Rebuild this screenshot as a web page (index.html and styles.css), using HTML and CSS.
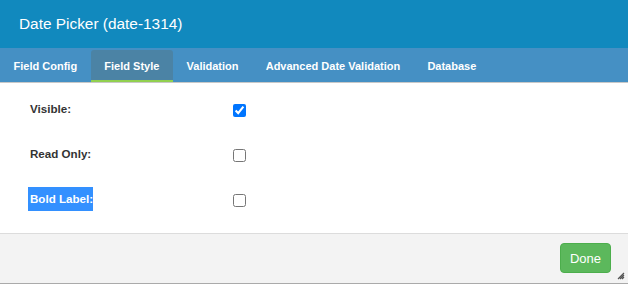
FILE: index.html
```html
<!DOCTYPE html>
<html lang="en">
<head>
  <meta charset="UTF-8">
  <title>Date Picker (date-1314)</title>
  <link rel="stylesheet" href="styles.css">
</head>
<body>

  <div class="dialog">
    <div class="dialog-header">Date Picker (date-1314)</div>

    <ul class="tabs">
      <li class="tab">Field Config</li>
      <li class="tab active">Field Style</li>
      <li class="tab">Validation</li>
      <li class="tab">Advanced Date Validation</li>
      <li class="tab">Database</li>
    </ul>

    <div class="dialog-body">
      <div class="row">
        <label class="row-label" for="visible">Visible:</label>
        <input type="checkbox" id="visible" checked>
      </div>
      <div class="row">
        <label class="row-label" for="readOnly">Read Only:</label>
        <input type="checkbox" id="readOnly">
      </div>
      <div class="row">
        <label class="row-label" for="boldLabel"><span class="selected">Bold Label:</span></label>
        <input type="checkbox" id="boldLabel">
      </div>
    </div>

    <div class="dialog-footer">
      <button class="btn-done">Done</button>
      <svg class="grip" width="8" height="8" viewBox="0 0 8 8">
        <path d="M7 1 L1 7 M7 3 L3 7 M7 5 L5 7" stroke="#555" stroke-width="1.2"/>
      </svg>
    </div>
  </div>

</body>
</html>
```

FILE: styles.css
```css
body {
  margin: 0;
  font-family: 'Liberation Sans', Arial, sans-serif;
  background: #fff;
}

.dialog {
  width: 628px;
  height: 284px;
  display: flex;
  flex-direction: column;
}

.dialog-header {
  height: 48px;
  flex: none;
  box-sizing: border-box;
  padding: 0 19px;
  display: flex;
  align-items: center;
  background: #1189be;
  color: #fff;
  font-size: 15.4px;
}

.tabs {
  list-style: none;
  margin: 0;
  padding: 2px 0 0;
  height: 35px;
  flex: none;
  box-sizing: border-box;
  display: flex;
  background: #4590c4;
  border-bottom: 1px solid #c8c8c8;
}

.tab {
  padding: 0 13.6px;
  display: flex;
  align-items: center;
  color: #fff;
  font-size: 11px;
  font-weight: bold;
  border-radius: 3px 3px 0 0;
}

.tab.active {
  background: #4b83a5;
  border-bottom: 2px solid #92d050;
  padding-top: 2px;
}

.dialog-body {
  height: 150px;
  flex: none;
  box-sizing: border-box;
  padding: 5px 0 0 30px;
}

.row {
  display: flex;
  align-items: center;
  height: 45px;
}

.row-label {
  width: 199px;
  color: #333;
  font-size: 11.6px;
  font-weight: bold;
  margin-top: -4px;
}

.row input {
  margin: 0 0 0 4px;
  width: 13px;
  height: 13px;
}

.selected {
  display: inline-block;
  background: #3390ff;
  color: #fff;
  padding: 5px 0 6px 2px;
  margin-left: -2px;
}

.dialog-footer {
  height: 51px;
  flex: none;
  box-sizing: border-box;
  background: #f3f3f3;
  border-top: 1px solid #dcdcdc;
  border-bottom: 1px solid #aaa;
  display: flex;
  align-items: center;
  justify-content: flex-end;
  padding-right: 17px;
  position: relative;
}

.btn-done {
  width: 51px;
  height: 30px;
  background: #5cb85c;
  border: 1px solid #4cae4c;
  border-radius: 4px;
  color: #fff;
  font-family: 'Liberation Sans', Arial, sans-serif;
  font-size: 13px;
  padding: 0;
  margin-top: -1px;
}

.grip {
  position: absolute;
  right: 3px;
  bottom: 3px;
}
```
